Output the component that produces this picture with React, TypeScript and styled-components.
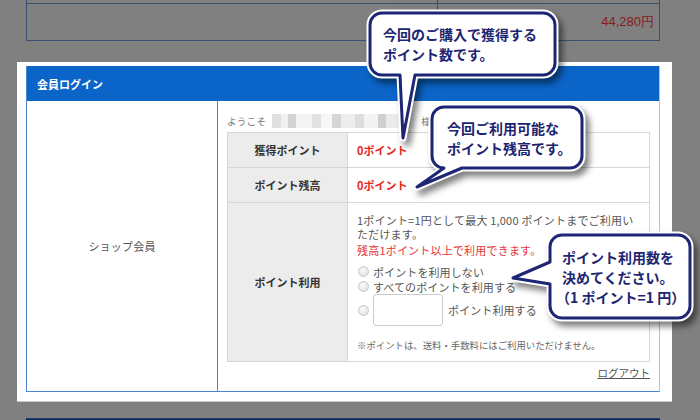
import styled, { createGlobalStyle } from 'styled-components';

const GlobalStyle = createGlobalStyle`
  html, body {
    margin: 0;
    padding: 0;
    background: #808080;
  }
  body {
    font-family: "Noto Sans CJK JP", "Noto Sans", sans-serif;
  }
`;

const Page = styled.div`
  position: relative;
  width: 700px;
  height: 420px;
  overflow: hidden;
  background: #808080;
`;

/* dimmed order table above the panel */
const OrderTable = styled.div`
  margin-left: 26px;
  width: 634px;
  box-sizing: border-box;
  display: grid;
  grid-template-columns: 411px 1fr;
  grid-template-rows: 4px 36px;
  border: 1px solid #3a5071;
  border-top: none;
`;

const OrderCell = styled.div<{ $first?: boolean; $left?: boolean }>`
  box-sizing: border-box;
  border-bottom: ${(p) => (p.$first ? '1px solid #3a5071' : 'none')};
  border-right: ${(p) => (p.$left ? '1px solid #3a5071' : 'none')};
`;

const Price = styled(OrderCell)`
  display: flex;
  align-items: center;
  justify-content: flex-end;
  padding-right: 5px;
  font-family: "Liberation Sans", Arial, sans-serif;
  font-size: 13px;
  color: #8a1a1a;
`;

const Panel = styled.div`
  margin: 21px 0 0 17px;
  width: 655px;
  height: 339px;
  box-sizing: border-box;
  padding: 4px 12px 9px 9px;
  background: #fff;
  box-shadow: 0 1px 0 #c8c8c8;
`;

const LoginBox = styled.div`
  height: 100%;
  box-sizing: border-box;
  display: flex;
  flex-direction: column;
  border: 1px solid #4a86cc;
  border-top: none;
  border-right-color: #a6c6ea;
`;

const Header = styled.div`
  height: 35px;
  flex: none;
  display: flex;
  align-items: center;
  padding-left: 10px;
  background: #0b65c8;
  color: #fff;
  font-size: 11px;
  font-weight: 700;
`;

const Body = styled.div`
  flex: 1;
  display: grid;
  grid-template-columns: 191px 1fr;
`;

const MemberCell = styled.div`
  box-sizing: border-box;
  border-right: 1px solid #4a86cc;
  display: flex;
  align-items: center;
  justify-content: center;
  font-size: 11px;
  letter-spacing: 0.2px;
  color: #555;
`;

const Content = styled.div`
  padding: 12px 9px 0 9px;
`;

const Welcome = styled.div`
  height: 16px;
  padding-bottom: 3px;
  display: flex;
  align-items: center;
  gap: 6px;
  font-size: 9.5px;
  letter-spacing: 0.3px;
  color: #777;
`;

const Mosaic = styled.span`
  display: inline-block;
  width: 143px;
  height: 14px;
  background:
    linear-gradient(
      90deg,
      #e0e0e0 0 6%,
      #f0f0f0 6% 11%,
      #d2d2d2 11% 17%,
      #f4f4f4 17% 28%,
      #e2e2e2 28% 34%,
      #f7f7f7 34% 42%,
      #d6d6d6 42% 48%,
      #ededed 48% 58%,
      #dddddd 58% 64%,
      #f3f3f3 64% 74%,
      #d0d0d0 74% 80%,
      #ebebeb 80% 88%,
      #f6f6f6 88% 100%
    );
`;

const PointTable = styled.div`
  display: grid;
  grid-template-columns: 120px 1fr;
  grid-template-rows: 35px 35px 158px;
  border: 1px solid #d6d6d6;
`;

const LabelCell = styled.div<{ $last?: boolean }>`
  box-sizing: border-box;
  display: flex;
  align-items: center;
  justify-content: center;
  background: #ececec;
  border-right: 1px solid #d6d6d6;
  border-bottom: ${(p) => (p.$last ? 'none' : '1px solid #d6d6d6')};
  font-size: 11px;
  font-weight: 700;
  color: #333;
`;

const ValueCell = styled.div<{ $last?: boolean }>`
  box-sizing: border-box;
  display: flex;
  align-items: center;
  padding-left: 9px;
  border-bottom: ${(p) => (p.$last ? 'none' : '1px solid #d6d6d6')};
  font-size: 11px;
  font-weight: 700;
  color: #e8261e;
`;

const UsageCell = styled.div`
  padding: 10px 9px 0 9px;
  font-size: 11px;
  color: #555;
`;

const Para = styled.div<{ $red?: boolean }>`
  line-height: 14px;
  letter-spacing: 0.2px;
  color: ${(p) => (p.$red ? '#e8333a' : '#555')};
  margin-top: ${(p) => (p.$red ? '2px' : '0')};
`;

const Options = styled.div`
  margin-top: 7px;
  display: flex;
  flex-direction: column;
`;

const Option = styled.label<{ $tall?: boolean }>`
  display: flex;
  align-items: center;
  gap: 4px;
  height: ${(p) => (p.$tall ? '32px' : '15px')};
  font-size: 11px;
  color: #555;
  letter-spacing: 0.1px;
`;

const Radio = styled.span`
  width: 9px;
  height: 9px;
  flex: none;
  margin-left: 1px;
  border-radius: 50%;
  border: 1px solid #c8c8c8;
  background: radial-gradient(circle at 40% 35%, #fafafa, #dcdcdc);
`;

const PointInput = styled.span`
  width: 70px;
  height: 32px;
  box-sizing: border-box;
  border: 1px solid #ccc;
  border-radius: 3px;
  background: #fff;
  margin-right: 1px;
`;

const Note = styled.div`
  margin-top: 12px;
  line-height: 14px;
  font-size: 9.4px;
  color: #666;
`;

const Logout = styled.div`
  margin-top: 4px;
  text-align: right;
  line-height: 14px;
  font-size: 10.5px;
  color: #555;
  text-decoration: underline;
`;

const NextBar = styled.div`
  margin: 17px 0 0 26px;
  width: 634px;
  height: 20px;
  background: #0f2c58;
  border-top: 1px solid #1b3e70;
`;

/* speech bubbles laid over the form */
const CalloutBox = styled.div<{ $x: number; $y: number; $w: number; $h: number; $pl: number }>`
  position: absolute;
  left: ${(p) => p.$x}px;
  top: ${(p) => p.$y}px;
  width: ${(p) => p.$w}px;
  height: ${(p) => p.$h}px;
  box-sizing: border-box;
  padding-left: ${(p) => p.$pl}px;
  display: flex;
  flex-direction: column;
  justify-content: center;
`;

const BubbleSvg = styled.svg`
  position: absolute;
  left: 0;
  top: 0;
  overflow: visible;
  filter: drop-shadow(4px 5px 3px rgba(0, 0, 0, 0.5));
`;

const CalloutLine = styled.span<{ $pull?: number }>`
  position: relative;
  display: block;
  margin-left: ${(p) => -(p.$pull || 0)}px;
  font-size: 14px;
  line-height: 20px;
  font-weight: 700;
  color: #1d2470;
  white-space: nowrap;
`;

type Tail = { side: 'bottom' | 'left'; a: number; b: number; tx: number; ty: number };

function bubblePath(w: number, h: number, r: number, t: Tail) {
  const arc = (x: number, y: number) => `A ${r} ${r} 0 0 1 ${x} ${y}`;
  const top = `M ${r} 0 H ${w - r} ${arc(w, r)} V ${h - r} ${arc(w - r, h)}`;
  if (t.side === 'bottom') {
    return `${top} H ${t.b} L ${t.tx} ${t.ty} L ${t.a} ${h} H ${r} ${arc(0, h - r)} V ${r} ${arc(r, 0)} Z`;
  }
  return `${top} H ${r} ${arc(0, h - r)} V ${t.b} L ${t.tx} ${t.ty} L 0 ${t.a} V ${r} ${arc(r, 0)} Z`;
}

function Callout(props: {
  x: number;
  y: number;
  w: number;
  h: number;
  pl: number;
  tail: Tail;
  lines: { text: string; pull?: number }[];
}) {
  const d = bubblePath(props.w, props.h, 12, props.tail);
  return (
    <CalloutBox $x={props.x} $y={props.y} $w={props.w} $h={props.h} $pl={props.pl}>
      <BubbleSvg width={props.w} height={props.h}>
        <path d={d} fill="#fff" stroke="#fff" strokeWidth={7} strokeLinejoin="round" />
        <path d={d} fill="#fff" stroke="#1d2675" strokeWidth={3} strokeLinejoin="round" />
      </BubbleSvg>
      {props.lines.map((l) => (
        <CalloutLine key={l.text} $pull={l.pull}>
          {l.text}
        </CalloutLine>
      ))}
    </CalloutBox>
  );
}

export default function App() {
  return (
    <Page>
      <GlobalStyle />
      <OrderTable>
        <OrderCell $first $left />
        <OrderCell $first />
        <OrderCell $left />
        <Price>44,280円</Price>
      </OrderTable>

      <Panel>
        <LoginBox>
          <Header>会員ログイン</Header>
          <Body>
            <MemberCell>ショップ会員</MemberCell>
            <Content>
              <Welcome>
                <span>ようこそ</span>
                <Mosaic />
                <span>様</span>
              </Welcome>
              <PointTable>
                <LabelCell>獲得ポイント</LabelCell>
                <ValueCell>0ポイント</ValueCell>
                <LabelCell>ポイント残高</LabelCell>
                <ValueCell>0ポイント</ValueCell>
                <LabelCell $last>ポイント利用</LabelCell>
                <UsageCell>
                  <Para>1ポイント=1円として最大 1,000 ポイントまでご利用いただけます。</Para>
                  <Para $red>残高1ポイント以上で利用できます。</Para>
                  <Options>
                    <Option>
                      <Radio />
                      ポイントを利用しない
                    </Option>
                    <Option>
                      <Radio />
                      すべてのポイントを利用する
                    </Option>
                    <Option $tall>
                      <Radio />
                      <PointInput />
                      ポイント利用する
                    </Option>
                  </Options>
                  <Note>※ポイントは、送料・手数料にはご利用いただけません。</Note>
                </UsageCell>
              </PointTable>
              <Logout>ログアウト</Logout>
            </Content>
          </Body>
        </LoginBox>
      </Panel>

      <NextBar />

      <Callout
        x={370}
        y={13}
        w={185}
        h={62}
        pl={13}
        tail={{ side: 'bottom', a: 30, b: 45, tx: 33, ty: 125 }}
        lines={[{ text: '今回のご購入で獲得する' }, { text: 'ポイント数です。' }]}
      />
      <Callout
        x={432}
        y={107}
        w={150}
        h={61}
        pl={15}
        tail={{ side: 'bottom', a: 12, b: 30, tx: -15, ty: 80 }}
        lines={[{ text: '今回ご利用可能な' }, { text: 'ポイント残高です。' }]}
      />
      <Callout
        x={550}
        y={235}
        w={140}
        h={83}
        pl={12}
        tail={{ side: 'left', a: 27, b: 49, tx: -37, ty: 43 }}
        lines={[{ text: 'ポイント利用数を' }, { text: '決めてください。' }, { text: '（1 ポイント=1 円）', pull: 6 }]}
      />
    </Page>
  );
}
